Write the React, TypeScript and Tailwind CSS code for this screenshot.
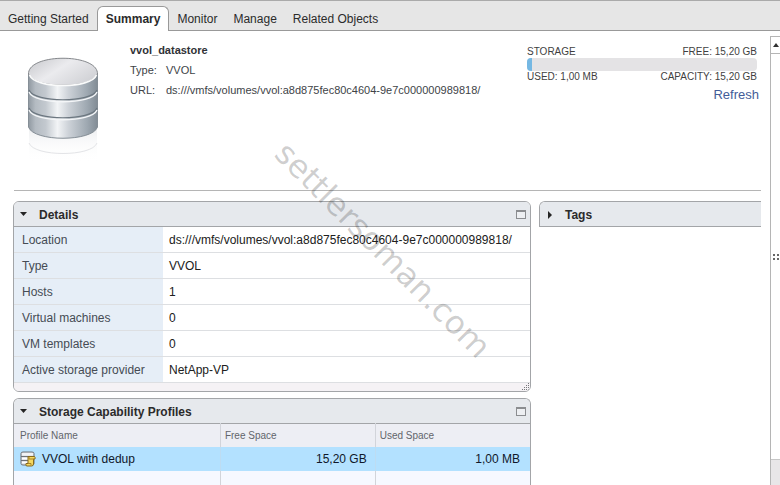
import React from "react";
import clsx from "clsx";

const TABS = ["Getting Started", "Summary", "Monitor", "Manage", "Related Objects"];

const DETAILS = [
    { label: "Location", value: "ds:///vmfs/volumes/vvol:a8d875fec80c4604-9e7c000000989818/" },
    { label: "Type", value: "VVOL" },
    { label: "Hosts", value: "1" },
    { label: "Virtual machines", value: "0" },
    { label: "VM templates", value: "0" },
    { label: "Active storage provider", value: "NetApp-VP" },
];

const DatastoreIcon = () => (
    <svg width="76" height="110" viewBox="0 0 76 110" aria-hidden="true">
        <defs>
            <linearGradient id="body" x1="0" x2="1" y1="0" y2="0">
                <stop offset="0" stopColor="#9099a1" />
                <stop offset="0.1" stopColor="#b4bbc2" />
                <stop offset="0.25" stopColor="#c3c9cf" />
                <stop offset="0.42" stopColor="#f2f4f6" />
                <stop offset="0.58" stopColor="#cdd2d8" />
                <stop offset="0.85" stopColor="#9ea8b1" />
                <stop offset="1" stopColor="#828c95" />
            </linearGradient>
            <linearGradient id="lid" x1="0" x2="1" y1="0" y2="0.6">
                <stop offset="0" stopColor="#c6c7cb" />
                <stop offset="0.5" stopColor="#ebebee" />
                <stop offset="1" stopColor="#d2d3d7" />
            </linearGradient>
            <linearGradient id="fade" x1="0" x2="0" y1="0" y2="1">
                <stop offset="0" stopColor="#e9ebed" stopOpacity="0.8" />
                <stop offset="1" stopColor="#ffffff" stopOpacity="0" />
            </linearGradient>
        </defs>
        <path d="M5 72v34h68V72z" fill="url(#fade)" />
        <path d="M5 87c5 14 63 14 68 0" fill="none" stroke="#e3e4e7" />
        <path d="M4.500 18v53c5 15 64 15 69 0V18z" fill="url(#body)" stroke="#858e96" />
        <path d="M5 34c5 13 63 13 68 0M5 52c5 13 63 13 68 0" fill="none" stroke="#6c7780" strokeWidth="1.2" />
        <path d="M5 36c5 13 63 13 68 0M5 54c5 13 63 13 68 0" fill="none" stroke="#f4f6f8" strokeWidth="1.3" />
        <path d="M4.500 18C4 -3 74 -3 73.500 18C69 33 9 33 4.500 18z" fill="url(#lid)" stroke="#85888c" />
        <path d="M5.500 19c5 14 62 14 67 0" fill="none" stroke="#fafbfb" strokeWidth="1.6" />
    </svg>
);

const ProfileIcon = () => (
    <svg width="16" height="16" viewBox="0 0 16 16" aria-hidden="true">
        <path d="M1 2.500Q1 1 3 1h9q2 0 2 1.500v10q0 1.500-2 1.500H3q-2 0-2-1.500z" fill="#e4e6ea" stroke="#6d7076" />
        <path d="M1 5.500h13M1 9.500h7" stroke="#6d7076" />
        <path d="M2 3h11M2 7.500h6M2 11.500h5" stroke="#fff" />
        <path d="M8 5.500h6.500q1 1 .5 2.500h-1.500v5q0 2-2 2H6.500q-1-1-.5-2.500h2z" fill="#f5d860" stroke="#87691d" />
        <path d="M8 12.500h3v2M9 6v2h5" fill="none" stroke="#a8832a" />
    </svg>
);

const Panel = ({
    title,
    open = true,
    className,
    children,
}: {
    title: string;
    open?: boolean;
    className?: string;
    children?: React.ReactNode;
}) => (
    <section className={clsx("overflow-hidden rounded-t-md border border-[#a3a5a8]", className)}>
        <div className="flex h-6 shrink-0 items-center bg-[#e6e9ed] pr-1 pl-1.5">
            <button aria-expanded={open} className="flex flex-1 items-center gap-3 pt-0.5 font-bold">
                <svg width="7" height="8" viewBox="0 0 7 8" className="fill-[#252525]" aria-hidden="true">
                    {open ? <path d="M0 1h7L3.500 5z" /> : <path d="M2 0l4 4-4 4z" />}
                </svg>
                {title}
            </button>
            {open && (
                <button aria-label={`Maximize ${title}`} className="box-content h-1.5 w-2 border border-t-2 border-[#8b8d90] bg-[#edeff2]" />
            )}
        </div>
        {children}
    </section>
);

const Header = () => (
    <header className="ml-px flex items-start border-b border-[#b5b5b5] pr-1 pb-6">
        <div className="w-29 shrink-0 pt-4 pl-2.5">
            <DatastoreIcon />
        </div>
        <div className="flex-1 text-[11px] leading-5 text-[#404347]">
            <h1 className="font-bold text-[#303236]">vvol_datastore</h1>
            <dl className="grid grid-cols-[36px_1fr]">
                <dt>Type:</dt>
                <dd>VVOL</dd>
                <dt>URL:</dt>
                <dd>ds:///vmfs/volumes/vvol:a8d875fec80c4604-9e7c000000989818/</dd>
            </dl>
        </div>
        <div className="flex w-[230px] shrink-0 flex-col pt-1.5 text-[10px] leading-3 text-[#3f3f3f]">
            <div className="flex justify-between">
                <span>STORAGE</span>
                <span>FREE: 15,20 GB</span>
            </div>
            <div className="h-[13px] overflow-hidden rounded-sm bg-[#e4e3e5]">
                <div className="h-full w-[5px] bg-[#75b8e3]" />
            </div>
            <div className="flex justify-between">
                <span>USED: 1,00 MB</span>
                <span>CAPACITY: 15,20 GB</span>
            </div>
            <a href="#refresh" className="-mr-0.5 self-end text-[13px] leading-6 text-[#435c98]">
                Refresh
            </a>
        </div>
    </header>
);

const DetailsTable = () => (
    <>
        <table className="w-full border-t border-[#a3a5a8]">
            <tbody>
                {DETAILS.map(({ label, value }) => (
                    <tr key={label} className="h-[26px] border-b border-[#dddfe2]">
                        <th scope="row" className="w-[149px] bg-[#e6eef7] pl-2 text-left font-normal text-[#454b54]">
                            {label}
                        </th>
                        <td className="pl-1.5 text-[#202020]">{value}</td>
                    </tr>
                ))}
            </tbody>
        </table>
        <div className="flex h-2 items-end justify-end bg-[#f5f2f5]">
            <svg width="10" height="8" viewBox="0 0 10 8" aria-hidden="true">
                <path
                    d="M8 0h1M6 2h3M4 4h5M2 6h7"
                    transform="translate(0 .5)"
                    stroke="#77797c"
                    strokeDasharray="1 1"
                />
            </svg>
        </div>
    </>
);

const ProfilesTable = () => (
    <table className="h-full w-full table-fixed border-t border-[#a3a5a8]">
        <thead>
            <tr className="h-[23px] bg-[#edeef4] text-left text-[10px] text-[#62656b]">
                <th scope="col" className="w-2/5 pl-1.5 font-normal">Profile Name</th>
                <th scope="col" className="w-[30%] border-l border-[#d2d4da] pl-1 font-normal">Free Space</th>
                <th scope="col" className="w-[30%] border-l border-[#d2d4da] pl-1 font-normal">Used Space</th>
            </tr>
        </thead>
        <tbody>
            <tr className="h-6 bg-[#b3e1ff] text-right text-[#10182a]">
                <td className="pl-1.5">
                    <div className="flex items-center gap-1.5">
                        <ProfileIcon />
                        VVOL with dedup
                    </div>
                </td>
                <td className="border-l border-[#bddcf2] pr-2">15,20 GB</td>
                <td className="border-l border-[#bddcf2] pr-2.5">1,00 MB</td>
            </tr>
            <tr className="bg-[#f6f8ff]">
                <td />
                <td className="border-l border-[#d2d4da]" />
                <td className="border-l border-[#d2d4da]" />
            </tr>
        </tbody>
    </table>
);

export default function App() {
    return (
        <div className="relative flex h-screen flex-col overflow-hidden bg-white font-['Liberation_Sans',Arial,sans-serif] text-xs text-[#2b2b2b]">
            <nav className="flex h-[31px] shrink-0 items-end border-t border-[#aaaaaa] bg-[#e6e6e6]">
                {TABS.map((tab) => (
                    <button
                        key={tab}
                        className={clsx(
                            "h-[25px] px-2",
                            tab === "Summary"
                                ? "rounded-t-md border border-b-0 border-[#999999] bg-white font-bold"
                                : "border-b border-[#999999] pt-0.5"
                        )}
                    >
                        {tab}
                    </button>
                ))}
                <div className="h-[25px] flex-1 border-b border-[#999999]" />
            </nav>

            <div className="flex min-h-0 flex-1">
                <main className="flex min-w-0 flex-1 flex-col pt-[9px] pr-[9px] pl-[13px]">
                    <Header />
                    <div className="grid min-h-0 flex-1 grid-cols-[7fr_3fr] gap-2 pt-2.5">
                        <div className="flex min-h-0 flex-col gap-1.5">
                            <Panel title="Details" className="shrink-0 rounded-b-md">
                                <DetailsTable />
                            </Panel>
                            <Panel title="Storage Capability Profiles" className="flex min-h-0 flex-1 flex-col border-b-0">
                                <ProfilesTable />
                            </Panel>
                        </div>
                        <div>
                            <Panel title="Tags" open={false} className="rounded-tr-none border-r-0" />
                        </div>
                    </div>
                </main>

                <aside className="mt-[5px] flex w-2.5 shrink-0 flex-col border-l border-[#b5b5b5]">
                    <button aria-label="Scroll up" className="flex h-[18px] items-center justify-center border-t border-b border-[#b5b5b5]">
                        <svg width="6" height="4" viewBox="0 0 6 4" className="fill-[#303030]" aria-hidden="true">
                            <path d="M3 0l3 4H0z" />
                        </svg>
                    </button>
                    <div className="flex flex-1 items-center justify-center">
                        <svg width="6" height="6" viewBox="0 0 6 6" className="fill-[#666666]" aria-hidden="true">
                            <path d="M0 0h2v2H0zM4 0h2v2H4zM0 4h2v2H0zM4 4h2v2H4z" />
                        </svg>
                    </div>
                    <div className="h-[26px] border-t border-[#c6c6c6] bg-[#e8e6e8]" />
                </aside>
            </div>

            <div className="pointer-events-none absolute top-[250px] left-[383px] -translate-x-1/2 -translate-y-1/2 rotate-45 font-['DejaVu_Sans',Verdana,sans-serif] text-[32px] leading-none text-black/20">
                settlersoman.com
            </div>
        </div>
    );
}
